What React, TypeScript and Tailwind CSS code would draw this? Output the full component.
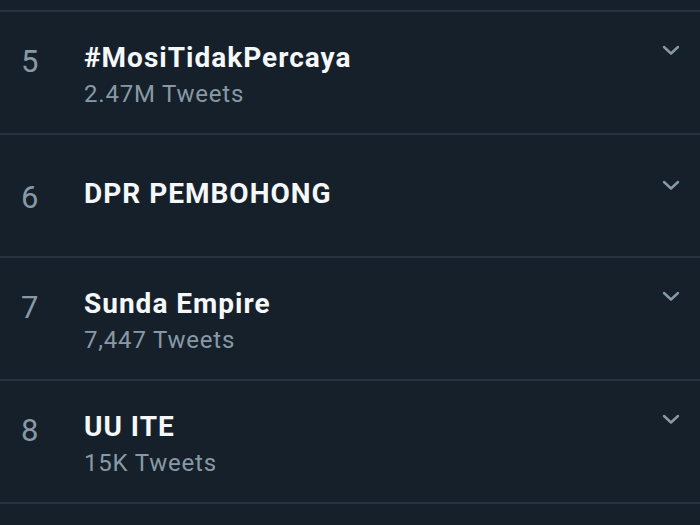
import React from 'react';

interface Trend {
  rank: number;
  title: string;
  tweets?: string;
}

const trends: Trend[] = [
  { rank: 5, title: '#MosiTidakPercaya', tweets: '2.47M Tweets' },
  { rank: 6, title: 'DPR PEMBOHONG' },
  { rank: 7, title: 'Sunda Empire', tweets: '7,447 Tweets' },
  { rank: 8, title: 'UU ITE', tweets: '15K Tweets' },
];

const Chevron = () => (
  <svg width="18" height="11" viewBox="0 0 18 11" fill="none">
    <polyline
      points="2,2 9,8.5 16,2"
      stroke="#8899a6"
      strokeWidth="2.4"
      strokeLinecap="round"
      strokeLinejoin="round"
    />
  </svg>
);

const TrendRow: React.FC<{ trend: Trend }> = ({ trend }) => (
  <div
    className={`h-[123px] flex items-start border-b-2 border-[#27323e] pr-[20px] ${
      trend.tweets ? 'pt-[30px]' : 'pt-[43px]'
    }`}
  >
    <div className="w-[84px] pl-[21px] mt-[4px] text-[31px] leading-[32px] text-[#8899a6]">
      {trend.rank}
    </div>
    <div className="flex-1 flex flex-col">
      <div className="text-[28px] leading-[32px] tracking-[1px] font-bold text-[#f5f8fa]">
        {trend.title}
      </div>
      {trend.tweets && (
        <div className="mt-[6px] text-[24px] leading-[28px] tracking-[0.8px] text-[#8899a6]">
          {trend.tweets}
        </div>
      )}
    </div>
    <div className={trend.tweets ? 'mt-[3px]' : 'mt-[2px]'}>
      <Chevron />
    </div>
  </div>
);

export default function App() {
  return (
    <div
      className="h-screen w-full overflow-hidden bg-[#15202b]"
      style={{ fontFamily: 'Roboto, "Noto Sans", sans-serif' }}
    >
      <div className="h-[12px] border-b-2 border-[#27323e]" />
      {trends.map((t) => (
        <TrendRow key={t.rank} trend={t} />
      ))}
    </div>
  );
}
